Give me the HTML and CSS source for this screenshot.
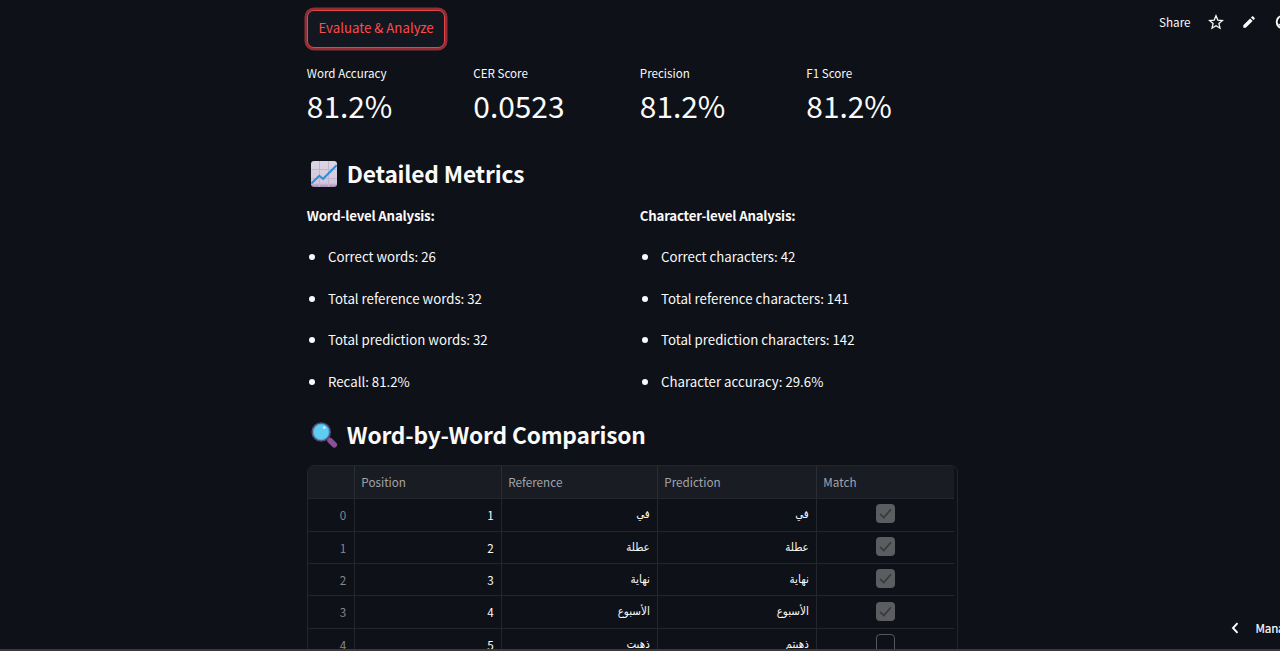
FILE: index.html
```html
<!DOCTYPE html>
<html lang="en">
<head>
<meta charset="utf-8">
<title>Evaluation</title>
<link rel="stylesheet" href="styles.css">
</head>
<body>
<main class="content">
  <button class="run-button">Evaluate &amp; Analyze</button>

  <section class="metrics">
    <div class="metric"><div class="metric-label">Word Accuracy</div><div class="metric-value">81.2%</div></div>
    <div class="metric"><div class="metric-label">CER Score</div><div class="metric-value">0.0523</div></div>
    <div class="metric"><div class="metric-label">Precision</div><div class="metric-value">81.2%</div></div>
    <div class="metric"><div class="metric-label">F1 Score</div><div class="metric-value">81.2%</div></div>
  </section>

  <h2 class="heading heading-metrics">
    <svg class="emoji" viewBox="0 0 28 28">
      <defs><linearGradient id="paper" x1="0" y1="0" x2="0" y2="1"><stop offset="0" stop-color="#ddd5e3"/><stop offset=".85" stop-color="#d3c6dd"/><stop offset="1" stop-color="#a58bb5"/></linearGradient></defs>
      <rect x="1" y="1" width="26" height="26" rx="3" fill="url(#paper)"/>
      <path d="M9.500 1v26M18.500 1v26M1 9.500h26M1 18.500h26" stroke="#c2b6cc" stroke-width="1" fill="none"/>
      <path d="M1.300 23.500L9.300 15.800l3.800 3L26.700 5.200" stroke="#2f8fd8" stroke-width="2" fill="none"/>
    </svg>
    <span>Detailed Metrics</span>
  </h2>

  <section class="analysis">
    <div>
      <p class="analysis-title">Word-level Analysis:</p>
      <ul class="facts">
        <li>Correct words: 26</li>
        <li>Total reference words: 32</li>
        <li>Total prediction words: 32</li>
        <li>Recall: 81.2%</li>
      </ul>
    </div>
    <div>
      <p class="analysis-title">Character-level Analysis:</p>
      <ul class="facts">
        <li>Correct characters: 42</li>
        <li>Total reference characters: 141</li>
        <li>Total prediction characters: 142</li>
        <li>Character accuracy: 29.6%</li>
      </ul>
    </div>
  </section>

  <h2 class="heading heading-words">
    <svg class="emoji" viewBox="0 0 28 28">
      <path d="M17.500 17l7 7" stroke="#533b70" stroke-width="3"/>
      <path d="M20 19.500l4.300 4.300" stroke="#8b4f98" stroke-width="5.500" stroke-linecap="round"/>
      <circle cx="11.200" cy="11" r="9" fill="#5fcdee" stroke="#594879" stroke-width="1.700"/>
      <circle cx="11.200" cy="11" r="7.800" fill="none" stroke="#3aa9df" stroke-width=".8"/>
      <circle cx="14.300" cy="6.500" r="1.500" fill="#b8efff"/>
    </svg>
    <span>Word-by-Word Comparison</span>
  </h2>

  <div class="table-frame">
    <div class="row head"><div></div><div>Position</div><div>Reference</div><div>Prediction</div><div>Match</div></div>
    <div class="row"><div class="index">0</div><div>1</div><div class="ar" lang="ar">في</div><div class="ar" lang="ar">في</div><div class="match"><svg class="check" viewBox="0 0 19 19"><path d="M4 9.800l3.800 3.700 7.200-8.300"/></svg></div></div>
    <div class="row"><div class="index">1</div><div>2</div><div class="ar" lang="ar">عطلة</div><div class="ar" lang="ar">عطلة</div><div class="match"><svg class="check" viewBox="0 0 19 19"><path d="M4 9.800l3.800 3.700 7.200-8.300"/></svg></div></div>
    <div class="row"><div class="index">2</div><div>3</div><div class="ar" lang="ar">نهاية</div><div class="ar" lang="ar">نهاية</div><div class="match"><svg class="check" viewBox="0 0 19 19"><path d="M4 9.800l3.800 3.700 7.200-8.300"/></svg></div></div>
    <div class="row"><div class="index">3</div><div>4</div><div class="ar" lang="ar">الأسبوع</div><div class="ar" lang="ar">الأسبوع</div><div class="match"><svg class="check" viewBox="0 0 19 19"><path d="M4 9.800l3.800 3.700 7.200-8.300"/></svg></div></div>
    <div class="row"><div class="index">4</div><div>5</div><div class="ar" lang="ar">ذهبت</div><div class="ar" lang="ar">ذهبتم</div><div class="match"><span class="check empty"></span></div></div>
  </div>
</main>

<nav class="toolbar">
  <span class="share">Share</span>
  <svg class="tool star" viewBox="0 0 16 16"><path d="M8 1.700l1.800 4.400 4.700.4-3.600 3.100 1.100 4.600L8 11.700l-4 2.500 1.100-4.600L1.500 6.500l4.700-.4z" fill="none" stroke="#fafafa" stroke-width="1.300"/></svg>
  <svg class="tool pencil" viewBox="0 0 16 16"><path d="M2.300 11.200v2.500h2.500l6.800-6.800-2.500-2.500zM9.900 3.600l2.500 2.500 1.100-1.100c.4-.4.400-.9 0-1.300l-1.200-1.200c-.4-.4-.9-.4-1.300 0z" fill="#fafafa"/></svg>
  <svg class="tool github" viewBox="0 0 16 16"><circle cx="8" cy="8" r="6.300" fill="none" stroke="#fafafa" stroke-width="1.900"/><path d="M3.500 10.200c1.300 0 1.300 1.800 3 1.800v2.300" fill="none" stroke="#fafafa" stroke-width="1.200"/></svg>
</nav>

<div class="manage">
  <svg class="chevron" viewBox="0 0 8 12"><path d="M6.500 1.200L2 6l4.500 4.800" fill="none" stroke="#fff" stroke-width="1.900"/></svg>
  <span>Manage app</span>
</div>
<div class="bottom-edge"></div>
</body>
</html>
```

FILE: styles.css
```css
* { box-sizing: border-box; }

body {
  margin: 0;
  width: 1280px;
  height: 651px;
  overflow: hidden;
  position: relative;
  background: #0e1117;
  color: #fafafa;
  font: 13.250px/24px "Noto Sans CJK SC", "Noto Sans", sans-serif;
}

.content {
  width: 651px;
  margin-left: 306.800px;
  padding-top: 10px;
}

.run-button {
  display: block;
  width: 138.500px;
  height: 38px;
  padding: 0 0 2px;
  border: 1px solid #e24447;
  border-radius: 7px;
  background: #131720;
  box-shadow: 0 0 0 2.500px #8f2f35;
  color: #ff4b4b;
  font: inherit;
  line-height: 34px;
  white-space: nowrap;
}

.metrics {
  display: grid;
  grid-template-columns: repeat(4, 1fr);
  column-gap: 15px;
  margin-top: 15px;
}

.metric-label { font-size: 11.600px; line-height: 20px; }
.metric-value { font-size: 29.900px; line-height: 45px; }

.heading {
  display: flex;
  align-items: center;
  gap: 9px;
  height: 36px;
  margin: 0;
  padding-left: 3px;
  font-size: 22.700px;
  font-weight: 700;
  letter-spacing: -0.180px;
  line-height: 36px;
  white-space: nowrap;
}

.heading-metrics { margin-top: 27.500px; }
.heading-words { margin-top: 23.500px; }
.emoji { width: 28px; height: 28px; flex: none; }

.analysis {
  display: grid;
  grid-template-columns: 1fr 1fr;
  column-gap: 15px;
  margin-top: 12px;
}

.analysis-title { margin: 0; font-weight: 700; letter-spacing: -0.200px; }

.facts { margin: 17.500px 0 0; padding: 0; list-style: none; }
.facts li { display: flex; align-items: center; height: 24px; margin-bottom: 17.500px; }
.facts li::before {
  content: "";
  width: 6px;
  height: 6px;
  margin: 0 13.200px 0 2px;
  border-radius: 50%;
  background: #fafafa;
}
.facts li:last-child { margin-bottom: 0; }

.table-frame {
  height: 200px;
  margin-top: 12px;
  border: 1px solid #22252b;
  border-radius: 7px;
  overflow: hidden;
  font-size: 11.700px;
}

.row {
  display: grid;
  grid-template-columns: 47px 147px 156px 159px 137px;
  width: 646px;
  height: 32.400px;
  border-bottom: 1px solid #23262c;
  line-height: 31px;
}
.row > div { padding: 0 7px; border-right: 1px solid #23262c; text-align: right; }
.row > div:last-child { border-right: 0; }
.row.head { height: 33.300px; background: #1a1c24; color: #a3a4a9; line-height: 32px; }
.row.head > div { padding-left: 6.500px; text-align: left; border-color: #2b2d35; }
.row > .index { padding-right: 7.500px; color: #85878b; }
.row > .ar { font-family: "DejaVu Sans Condensed", "DejaVu Sans", sans-serif; font-stretch: condensed; font-size: 11.500px; line-height: 31px; }

.row > .match { display: flex; align-items: center; justify-content: center; padding: 0 0 2px; }
.check {
  display: block;
  width: 19px;
  height: 19px;
  border-radius: 4px;
  background: #5b5d61;
}
.check path { fill: none; stroke: #36393e; stroke-width: 1.700; }
.check.empty { background: none; border: 1px solid #54565b; }

.toolbar {
  position: absolute;
  top: 10px;
  left: 1159px;
  width: 121px;
  display: flex;
  align-items: center;
  overflow: hidden;
  font-size: 11.700px;
}
.share { width: 49px; flex: none; }
.tool { width: 16px; height: 16px; flex: none; margin-right: 17px; }
.github { margin-left: 1px; }

.manage {
  position: absolute;
  left: 1231px;
  top: 616px;
  width: 49px;
  display: flex;
  align-items: center;
  gap: 16.500px;
  overflow: hidden;
  white-space: nowrap;
  font-size: 11.700px;
  letter-spacing: -0.200px;
  -webkit-text-stroke: 0.200px currentColor;
}
.chevron { width: 8px; height: 12px; flex: none; }

.bottom-edge {
  position: absolute;
  left: 0;
  right: 0;
  bottom: 0;
  height: 2px;
  background: #3b3a3b;
}
```
